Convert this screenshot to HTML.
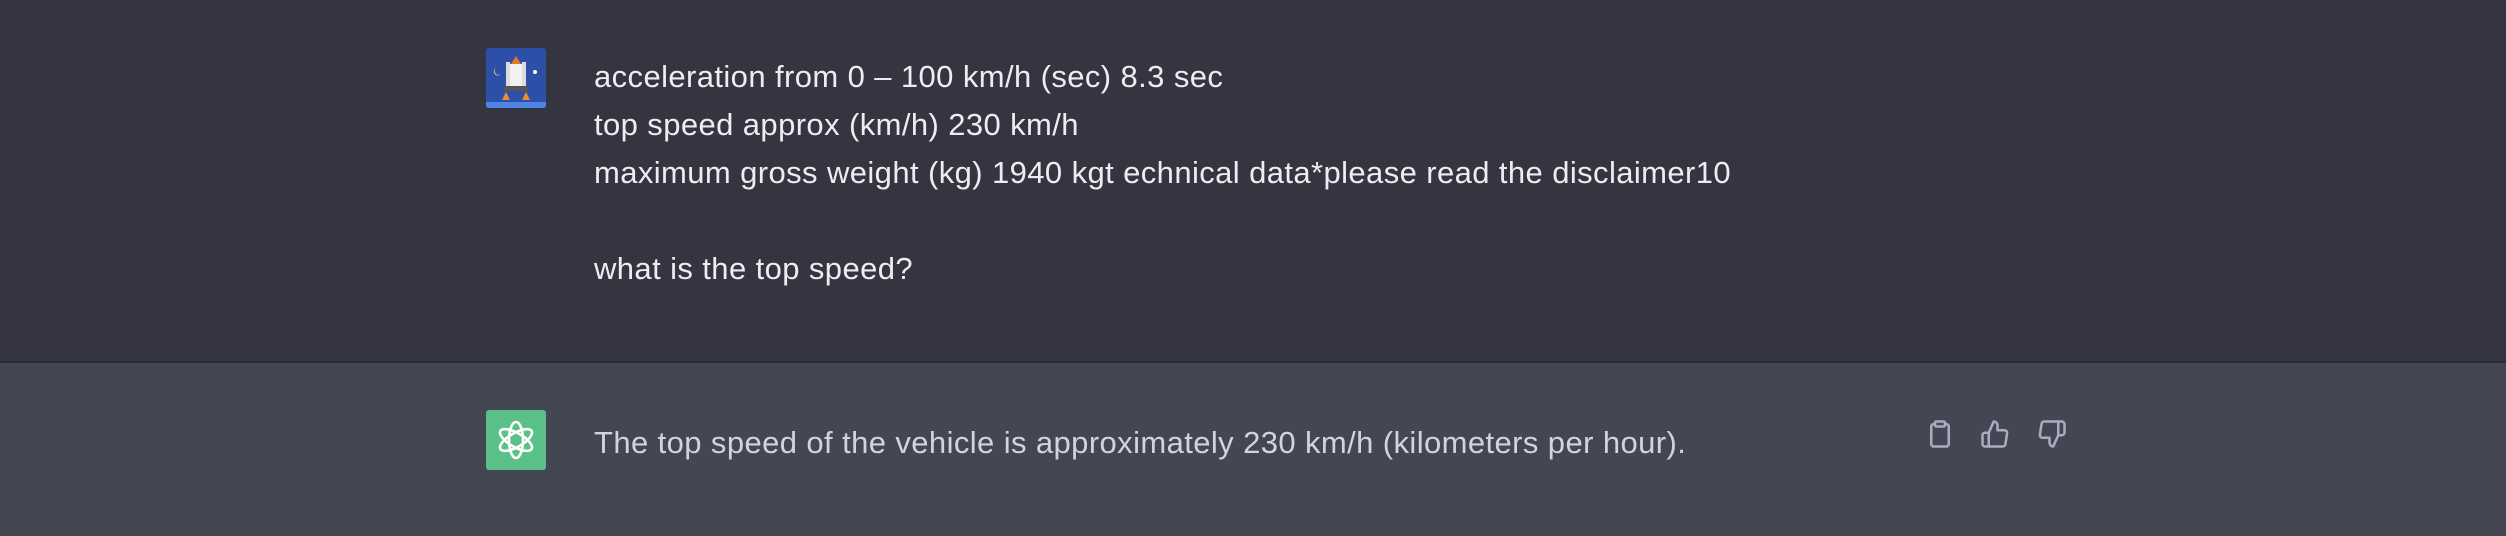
<!DOCTYPE html>
<html><head><meta charset="utf-8"><style>
html,body{margin:0;padding:0;width:2506px;height:536px;overflow:hidden;font-family:"Liberation Sans",sans-serif}
.top{position:absolute;left:0;top:0;width:2506px;height:361px;background:#343541;border-bottom:2px solid #2b2c36}
.bot{position:absolute;left:0;top:363px;width:2506px;height:173px;background:#444654}
.t{position:absolute;left:594px;font-size:31px;letter-spacing:0.4px;line-height:48px;white-space:pre;color:#ececf1}
.av{position:absolute;left:486px;width:60px;height:60px;border-radius:3px;overflow:hidden}
</style></head><body>
<div class="top">
<div class="av" style="top:48px;background:#2c50a8">
<div style="position:absolute;left:0;bottom:0;width:60px;height:6px;background:#4f86e6"></div>
<svg width="60" height="60" viewBox="0 0 60 60" style="position:absolute;left:0;top:0">
<path d="M30 8 L25 16 L35 16 Z" fill="#e07a2a"/>
<rect x="24" y="16" width="12" height="22" fill="#f2f2f2"/>
<rect x="20" y="14" width="4" height="26" fill="#ddd"/>
<rect x="36" y="14" width="4" height="26" fill="#ddd"/>
<rect x="18" y="38" width="24" height="5" fill="#555"/>
<path d="M16 52 L20 44 L24 52 Z M36 52 L40 44 L44 52 Z" fill="#f08a2a"/>
<path d="M10 20 a4 4 0 1 0 5 6 a3 3 0 1 1 -5 -6z" fill="#f0d070"/>
<circle cx="49" cy="24" r="2" fill="#fff"/>
</svg></div>
<div class="t" style="top:53px">acceleration from 0 – 100 km/h (sec) 8.3 sec
top speed approx (km/h) 230 km/h
maximum gross weight (kg) 1940 kgt echnical data*please read the disclaimer10

what is the top speed?</div>
</div>
<div class="bot">
<div class="av" style="top:47px;background:#5ac189">
<svg width="60" height="60" viewBox="0 0 60 60" fill="none" stroke="#fff" stroke-width="2.6">
<g transform="translate(30 30)">
<ellipse rx="7" ry="18" transform="rotate(0)"/>
<ellipse rx="7" ry="18" transform="rotate(60)"/>
<ellipse rx="7" ry="18" transform="rotate(120)"/>
</g></svg></div>
<div class="t" style="top:56px;color:#d1d5db">The top speed of the vehicle is approximately 230 km/h (kilometers per hour).</div>
<svg style="position:absolute;left:1925px;top:56px" width="30" height="30" viewBox="0 0 24 24" fill="none" stroke="#acacbe" stroke-width="2" stroke-linecap="round" stroke-linejoin="round"><path d="M16 4h1a2 2 0 0 1 2 2v14a2 2 0 0 1-2 2H7a2 2 0 0 1-2-2V6a2 2 0 0 1 2-2h1"/><rect x="8" y="2" width="8" height="4" rx="1"/></svg>
<svg style="position:absolute;left:1980px;top:56px" width="30" height="30" viewBox="0 0 24 24" fill="none" stroke="#acacbe" stroke-width="2" stroke-linecap="round" stroke-linejoin="round"><path d="M14 9V5a3 3 0 0 0-3-3l-4 9v11h11.3a2 2 0 0 0 2-1.7l1.4-9a2 2 0 0 0-2-2.3zM7 22H4a2 2 0 0 1-2-2v-7a2 2 0 0 1 2-2h3"/></svg>
<svg style="position:absolute;left:2037px;top:56px" width="30" height="30" viewBox="0 0 24 24" fill="none" stroke="#acacbe" stroke-width="2" stroke-linecap="round" stroke-linejoin="round"><path d="M10 15v4a3 3 0 0 0 3 3l4-9V2H5.7a2 2 0 0 0-2 1.7l-1.4 9a2 2 0 0 0 2 2.3zm7-13h2.7A2.3 2.3 0 0 1 22 4v7a2.3 2.3 0 0 1-2.3 2H17"/></svg>
</div>
</body></html>
